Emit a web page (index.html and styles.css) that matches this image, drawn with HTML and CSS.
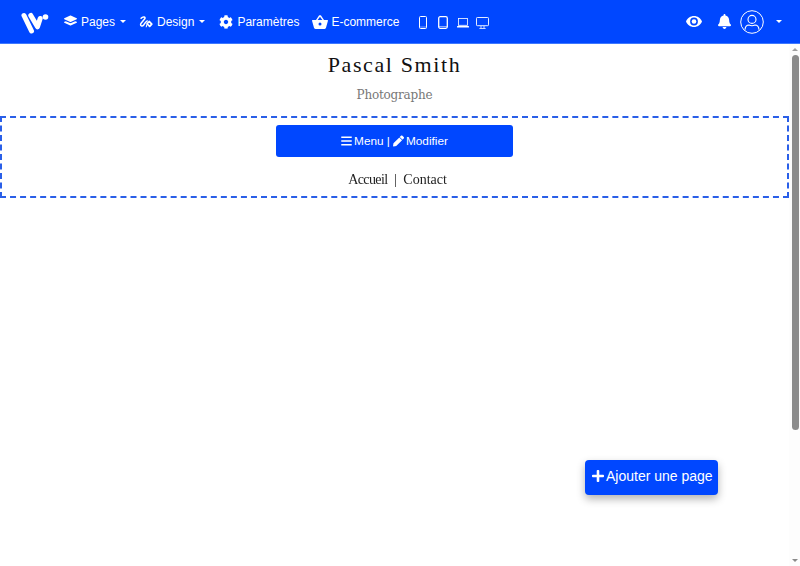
FILE: index.html
```html
<!DOCTYPE html>
<html lang="fr">
<head>
<meta charset="utf-8">
<title>Pascal Smith</title>
<link rel="stylesheet" href="styles.css">
</head>
<body>
<div class="app">
  <nav class="topbar">
    <svg class="logo" viewBox="0 0 30 24"><path d="M4 5.5 L11.5 21 M10.8 5.5 L17.5 16.8 L20.2 8.5" fill="none" stroke="#fff" stroke-width="5" stroke-linecap="round" stroke-linejoin="round"/><circle cx="25.5" cy="7" r="2.8" fill="#fff"/></svg>
    <div class="menu">
      <a class="item item-tight"><svg class="ic ic-13" viewBox="0 0 512 512"><path fill="#fff" d="M12.41 148.02l232.94 105.67c6.8 3.09 14.49 3.09 21.29 0l232.94-105.67c16.55-7.51 16.55-32.52 0-40.03L266.65 2.31a25.607 25.607 0 0 0-21.29 0L12.41 107.98c-16.55 7.51-16.55 32.53 0 40.04zM499.59 249.1l-57.87-26.23-161.86 73.37c-7.56 3.43-15.59 5.17-23.86 5.17s-16.29-1.74-23.86-5.17L70.29 222.87l-57.88 26.23c-16.55 7.5-16.55 32.5 0 40l232.94 105.59c6.8 3.08 14.49 3.08 21.29 0L499.59 289.1c16.55-7.5 16.55-32.5 0-40z"/></svg><span>Pages</span><i class="caret"></i></a>
      <a class="item"><svg class="ic ic-14" viewBox="0 0 16 14"><path fill="none" stroke="#fff" stroke-width="1.7" stroke-linecap="round" stroke-linejoin="round" d="M2.4 2.8 C4.4 .4 8 1 6.6 3.4 L2.4 8.4 C.6 10.8 3.4 13 5.4 10.4 C6.4 8.6 8 6.6 9.4 5.8"/><path fill="none" stroke="#fff" stroke-width="2" stroke-linejoin="round" d="M11.6 6.4 L14.6 9.4 L12.2 12 L9.2 9 Z"/><path fill="none" stroke="#fff" stroke-width="1.2" d="M9 9.6 L8.2 13"/></svg><span>Design</span><i class="caret"></i></a>
      <a class="item"><svg class="ic ic-14" viewBox="0 0 512 512"><path fill="#fff" d="M487.4 315.7l-42.6-24.6c4.3-23.2 4.3-47 0-70.2l42.6-24.6c4.9-2.8 7.1-8.6 5.5-14-11.1-35.6-30-67.8-54.7-94.6-3.8-4.1-10-5.1-14.8-2.3L380.8 110c-17.9-15.4-38.5-27.3-60.8-35.1V25.8c0-5.6-3.9-10.5-9.4-11.7-36.7-8.2-74.3-7.8-109.2 0-5.5 1.2-9.4 6.1-9.4 11.7V75c-22.2 7.9-42.8 19.8-60.8 35.1L88.7 85.5c-4.9-2.8-11-1.9-14.8 2.3-24.7 26.7-43.6 58.9-54.7 94.6-1.7 5.4.6 11.2 5.5 14L67.3 221c-4.3 23.2-4.3 47 0 70.2l-42.6 24.6c-4.9 2.8-7.1 8.6-5.5 14 11.1 35.6 30 67.8 54.7 94.6 3.8 4.1 10 5.1 14.8 2.3l42.6-24.6c17.9 15.4 38.5 27.3 60.8 35.1v49.2c0 5.6 3.9 10.5 9.4 11.7 36.7 8.2 74.3 7.8 109.2 0 5.5-1.2 9.4-6.1 9.4-11.7v-49.2c22.2-7.9 42.8-19.8 60.8-35.1l42.6 24.6c4.9 2.8 11 1.9 14.8-2.3 24.7-26.7 43.6-58.9 54.7-94.6 1.5-5.5-.7-11.3-5.6-14.1zM256 336c-44.1 0-80-35.9-80-80s35.9-80 80-80 80 35.9 80 80-35.9 80-80 80z"/></svg><span>Paramètres</span></a>
      <a class="item item-basket"><svg class="ic ic-16" viewBox="0 0 16 14"><path fill="#fff" fill-rule="evenodd" d="M.6 5 H4 L7 .6 C7.5 0 8.5 0 9 .6 L12 5 H15.4 C16 5 16.1 5.6 15.9 6.1 L14 12.8 C13.8 13.5 13.3 14 12.6 14 H3.4 C2.7 14 2.2 13.5 2 12.8 L.1 6.1 C-.1 5.6 0 5 .6 5 Z M5.6 5 H10.4 L8 1.8 Z M8 7.4 A1.5 1.5 0 1 0 8 10.4 A1.5 1.5 0 1 0 8 7.4 Z"/></svg><span>E-commerce</span></a>
    </div>
    <div class="devices">
      <svg class="dev dev-phone" viewBox="0 0 8 13"><rect x=".5" y=".5" width="7" height="12" rx="1" fill="none" stroke="#fff" stroke-width="1"/><path d="M.6 11 H7.4" stroke="#fff" stroke-width=".5"/></svg>
      <svg class="dev dev-tablet" viewBox="0 0 10 13"><rect x=".7" y=".7" width="8.6" height="11.6" rx="1.5" fill="none" stroke="#fff" stroke-width="1.3"/><path d="M.7 10.6 H9.3" stroke="#fff" stroke-width=".6"/></svg>
      <svg class="dev dev-laptop" viewBox="0 0 12 10"><rect x="1.5" y=".5" width="9" height="6.8" fill="none" stroke="#fff" stroke-width=".8"/><rect x="0" y="8" width="12" height="1.6" rx=".6" fill="#fff"/></svg>
      <svg class="dev dev-desktop" viewBox="0 0 13 12"><rect x=".5" y=".5" width="12" height="8.2" rx=".8" fill="none" stroke="#fff" stroke-width=".9"/><path d="M5 9 V11 M8 9 V11 M3.4 11.5 H9.6" stroke="#fff" stroke-width=".8" fill="none"/></svg>
    </div>
    <div class="tools">
      <svg class="eye" viewBox="0 0 16 11"><path fill="#fff" fill-rule="evenodd" d="M8 0 C11.6 0 14.6 2.2 16 5.5 C14.6 8.8 11.6 11 8 11 C4.4 11 1.4 8.8 0 5.5 C1.4 2.2 4.4 0 8 0 Z M8 1.6 A3.9 3.9 0 1 0 8 9.4 A3.9 3.9 0 1 0 8 1.6 Z"/><circle cx="8" cy="5.5" r="2.3" fill="#fff"/></svg>
      <svg class="bell" viewBox="0 0 448 512"><path fill="#fff" d="M224 512c35.32 0 63.97-28.65 63.97-64H160.03c0 35.35 28.65 64 63.97 64zm215.39-149.71c-19.32-20.76-55.47-51.99-55.47-154.29 0-77.7-54.48-139.9-127.94-155.16V32c0-17.67-14.32-32-31.98-32s-31.98 14.33-31.98 32v20.84C118.56 68.1 64.08 130.3 64.08 208c0 102.3-36.15 133.53-55.47 154.29-6 6.45-8.66 14.16-8.61 21.71.11 16.4 12.98 32 32.1 32h383.8c19.12 0 32-15.6 32.1-32 .05-7.55-2.61-15.27-8.61-21.71z"/></svg>
      <svg class="avatar" viewBox="0 0 24 24"><circle cx="12" cy="12" r="11.3" fill="none" stroke="#fff" stroke-width="1"/><circle cx="12" cy="9.4" r="4" fill="none" stroke="#fff" stroke-width="1.1"/><path d="M5 19.6 C5.3 16.6 7.2 15 9 15 C10.6 15.8 13.4 15.8 15 15 C16.8 15 18.7 16.6 19 19.6" fill="none" stroke="#fff" stroke-width="1.1"/></svg>
      <i class="caret caret-small"></i>
    </div>
  </nav>
  <div class="body-row">
    <main class="page">
      <header class="site-head">
        <h1 class="site-title">Pascal Smith</h1>
        <p class="site-sub">Photographe</p>
      </header>
      <section class="menu-zone">
        <button class="edit-btn"><svg class="ic-btn" viewBox="0 0 448 512"><path fill="#fff" d="M16 132h416c8.837 0 16-7.163 16-16V76c0-8.837-7.163-16-16-16H16C7.163 60 0 67.163 0 76v40c0 8.837 7.163 16 16 16zm0 160h416c8.837 0 16-7.163 16-16v-40c0-8.837-7.163-16-16-16H16c-8.837 0-16 7.163-16 16v40c0 8.837 7.163 16 16 16zm0 160h416c8.837 0 16-7.163 16-16v-40c0-8.837-7.163-16-16-16H16c-8.837 0-16 7.163-16 16v40c0 8.837 7.163 16 16 16z"/></svg><span class="btn-label">Menu |</span><svg class="ic-btn" viewBox="0 0 512 512"><path fill="#fff" d="M497.9 142.1l-46.1 46.1c-4.7 4.7-12.3 4.7-17 0l-111-111c-4.7-4.7-4.7-12.3 0-17l46.1-46.1c18.7-18.7 49.1-18.7 67.9 0l60.1 60.1c18.8 18.7 18.8 49.1 0 67.9zM284.2 99.8L21.6 362.4.4 483.9c-2.9 16.4 11.4 30.6 27.8 27.8l121.5-21.3 262.6-262.6c4.7-4.7 4.7-12.3 0-17l-111-111c-4.8-4.7-12.4-4.7-17.1 0z"/></svg><span>Modifier</span></button>
        <p class="site-links"><span class="link-home">Accueil</span> <span class="sep">|</span> Contact</p>
      </section>
      <button class="add-page"><svg class="ic-add" viewBox="0 0 448 512"><path fill="#fff" d="M416 208H272V64c0-17.67-14.33-32-32-32h-32c-17.67 0-32 14.33-32 32v144H32c-17.67 0-32 14.33-32 32v32c0 17.67 14.33 32 32 32h144v144c0 17.67 14.33 32 32 32h32c17.67 0 32-14.33 32-32V304h144c17.67 0 32-14.33 32-32v-32c0-17.67-14.33-32-32-32z"/></svg><span>Ajouter une page</span></button>
    </main>
    <div class="scrollbar">
      <i class="arrow arrow-up"></i>
      <div class="thumb"></div>
      <i class="arrow arrow-down"></i>
    </div>
  </div>
</div>
</body>
</html>
```

FILE: styles.css
```css
* { box-sizing: border-box; }
html, body { margin: 0; height: 100%; overflow: hidden; background: #fff; }
.app { display: flex; flex-direction: column; height: 566px; width: 800px; }

.topbar {
  display: flex; align-items: center; height: 44px; flex: none;
  background: #0047ff; border-bottom: 1px solid #3d78ff;
  color: #fff; font: 12px/16px "Liberation Sans", sans-serif;
  padding-left: 20px;
}
.logo { width: 30px; height: 24px; flex: none; margin-right: 14px; }
.menu { display: flex; align-items: center; gap: 13px; }
.item { display: flex; align-items: center; gap: 4px; white-space: nowrap; }
.item-tight { margin-right: -1px; }
.item-basket { gap: 3px; }
.ic { display: block; flex: none; }
.ic-13 { width: 13px; height: 14px; }
.ic-14 { width: 14px; height: 14px; }
.ic-16 { width: 16px; height: 14px; }
.caret { width: 0; height: 0; margin-left: 1px; margin-right: 1px; border: 3px solid transparent; border-top-color: #fff; border-bottom: 0; }
.caret-small { margin-left: 12px; margin-right: 0; }

.devices { display: flex; align-items: center; margin-left: 19px; padding-top: 2px; }
.dev { display: block; flex: none; }
.dev-phone { width: 8px; height: 13px; margin-left: 1px; }
.dev-tablet { width: 10px; height: 13px; margin-left: 11px; }
.dev-laptop { width: 12px; height: 10px; margin-left: 9px; }
.dev-desktop { width: 13px; height: 12px; margin-left: 7px; }

.tools { display: flex; align-items: center; margin-left: auto; margin-right: 18px; }
.eye { width: 16px; height: 11px; display: block; }
.bell { width: 13px; height: 15px; margin-left: 16px; display: block; }
.avatar { width: 24px; height: 24px; margin-left: 9px; display: block; }

.body-row { flex: 1; display: flex; min-height: 0; }
.page { flex: 1; min-width: 0; position: relative; }

.site-head { text-align: center; padding-top: 7px; }
.site-title { margin: 0; font: 400 22px/28px "Liberation Serif", serif; letter-spacing: 1.6px; color: #111; }
.site-sub { margin: 7px 0 0; font: 12px/18px "DejaVu Serif", serif; letter-spacing: -.2px; color: #777; }

.menu-zone { margin-top: 12px; height: 82px; border: 2px dashed #2a5fe8; padding-top: 7px; text-align: center; }
.edit-btn {
  display: flex; align-items: center; justify-content: center; gap: 2px;
  width: 237px; height: 32px; margin: 0 auto; padding: 0;
  border: 0; border-radius: 3px; background: #0047ff; color: #fff;
  font: 11.8px/16px "Liberation Sans", sans-serif;
}
.btn-label { margin-right: 1px; }
.ic-btn { width: 11px; height: 12px; display: block; flex: none; }
.site-links { margin: 14px 0 0; padding-left: 6px; font: 14px/18px "Liberation Serif", serif; color: #222; will-change: transform; }
.link-home { letter-spacing: -.6px; }
.sep { margin: 0 3px; }

.add-page {
  position: absolute; left: 585px; top: 416px;
  display: flex; align-items: center; gap: 2px;
  width: 133px; height: 35px; padding: 0 0 3px 7px;
  border: 0; border-radius: 4px; background: #0047ff; color: #fff;
  font: 14px/18px "Liberation Sans", sans-serif;
  box-shadow: 0 4px 8px rgba(0, 0, 0, .3);
}
.ic-add { width: 12px; height: 14px; display: block; flex: none; }

.scrollbar { width: 11px; flex: none; display: flex; flex-direction: column; align-items: center; background: #fdfdfd; padding-left: 1px; }
.arrow { width: 0; height: 0; border: 3.5px solid transparent; margin-top: 4px; flex: none; }
.arrow-up { border-top: 0; border-bottom-color: #a0a0a0; }
.arrow-down { border-bottom: 0; border-top-color: #8a8a8a; margin-top: auto; margin-bottom: 4px; }
.thumb { width: 7px; height: 375px; margin-top: 4px; border-radius: 4px; background: #8c8c8c; flex: none; }
```
